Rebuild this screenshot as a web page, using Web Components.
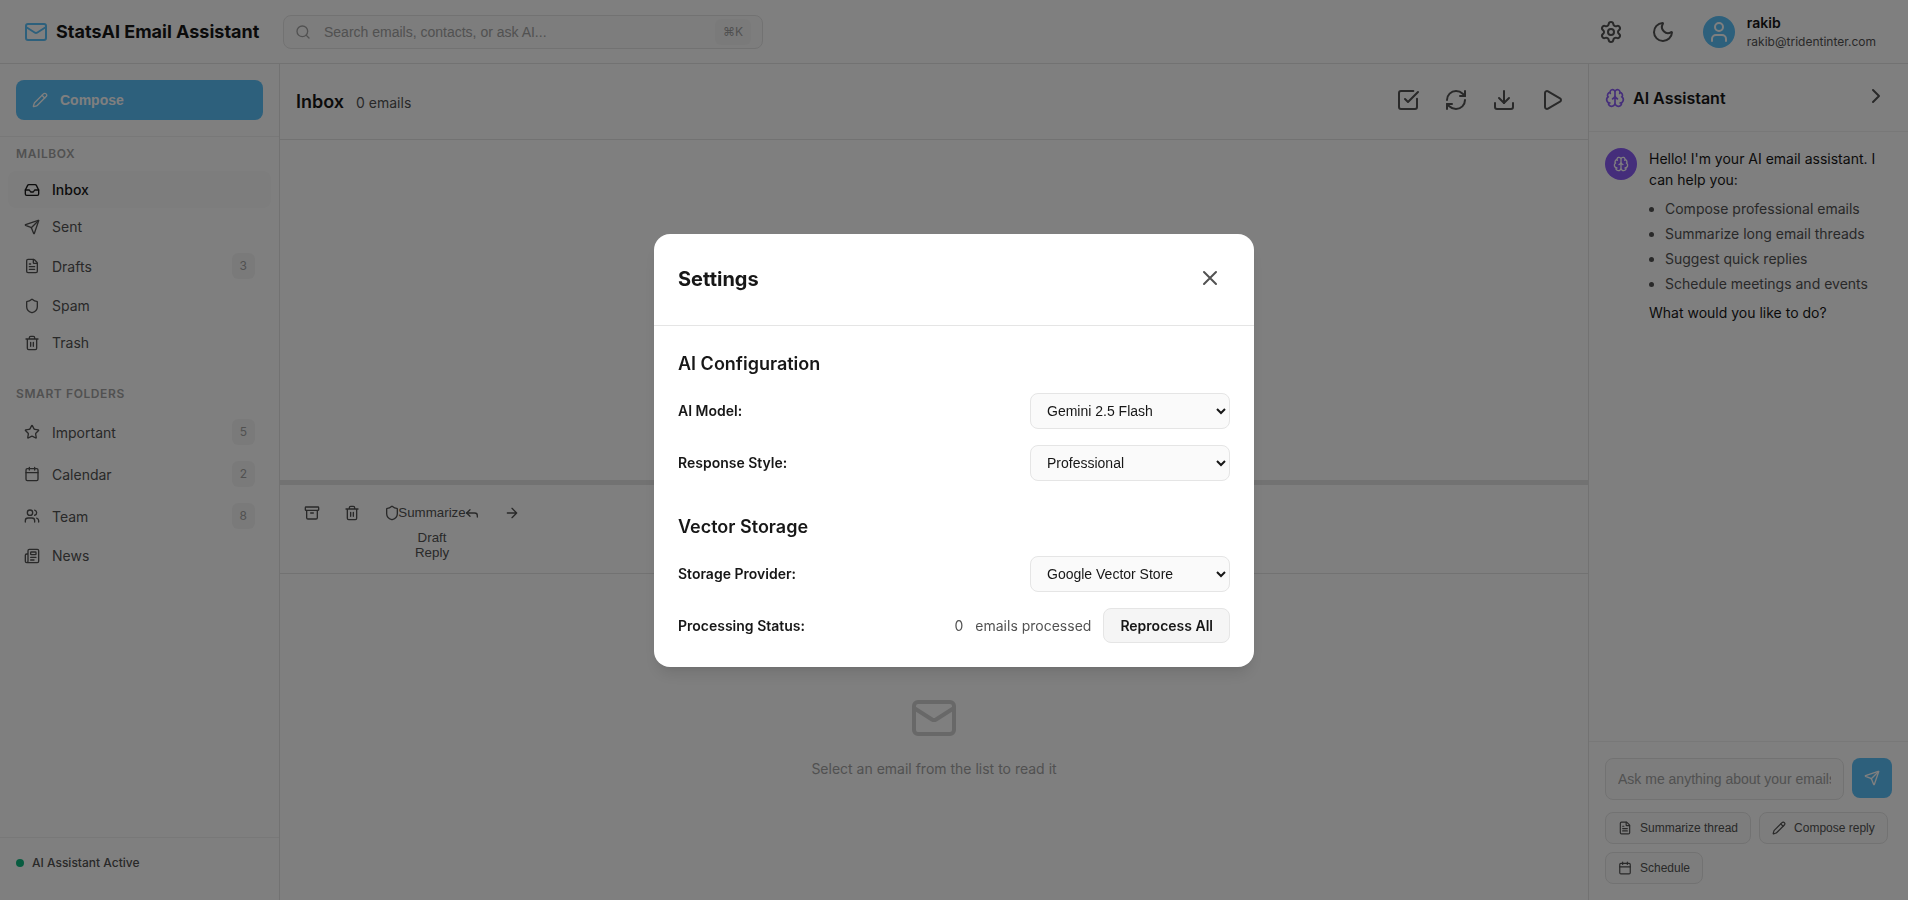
<!DOCTYPE html>
<html lang="en">
<head>
<meta charset="utf-8">
<title>StatsAI Email Assistant</title>
<style>
html,body{margin:0;height:100%;overflow:hidden}
body{font-family:Inter,"Liberation Sans",sans-serif;font-size:14px;line-height:1.5;color:#171717;background:#fff;
--line:#e5e5e5;--soft:#f0f0f0;--muted:#a3a3a3;--sub:#525252;--blue:#5bc0f8;--violet:#8b5cf6;--field:#fafafa;--chip:#f5f5f5;--ui:"Liberation Sans",Arial,sans-serif}
</style>
</head>
<body>
<mail-app></mail-app>
<script>
const ICONS={
mail:'<path d="m22 7-8.991 5.727a2 2 0 0 1-2.009 0L2 7"/><rect x="2" y="4" width="20" height="16" rx="2"/>',
search:'<path d="m21 21-4.34-4.34"/><circle cx="11" cy="11" r="8"/>',
settings:'<path d="M9.671 4.136a2.34 2.34 0 0 1 4.659 0 2.34 2.34 0 0 0 3.319 1.915 2.34 2.34 0 0 1 2.33 4.033 2.34 2.34 0 0 0 0 3.831 2.34 2.34 0 0 1-2.33 4.033 2.34 2.34 0 0 0-3.319 1.915 2.34 2.34 0 0 1-4.659 0 2.34 2.34 0 0 0-3.32-1.915 2.34 2.34 0 0 1-2.33-4.033 2.34 2.34 0 0 0 0-3.831A2.34 2.34 0 0 1 6.35 6.051a2.34 2.34 0 0 0 3.319-1.915"/><circle cx="12" cy="12" r="3"/>',
moon:'<path d="M20.985 12.486a9 9 0 1 1-9.473-9.472c.405-.022.617.46.402.803a6 6 0 0 0 8.268 8.268c.344-.215.825-.004.803.401"/>',
user:'<path d="M19 21v-2a4 4 0 0 0-4-4H9a4 4 0 0 0-4 4v2"/><circle cx="12" cy="7" r="4"/>',
pencil:'<path d="M21.174 6.812a1 1 0 0 0-3.986-3.987L3.842 16.174a2 2 0 0 0-.5.83l-1.321 4.352a.5.5 0 0 0 .623.622l4.353-1.32a2 2 0 0 0 .83-.497z"/><path d="m15 5 4 4"/>',
inbox:'<path d="M22 12h-6l-2 3h-4l-2-3H2"/><path d="M5.45 5.11 2 12v6a2 2 0 0 0 2 2h16a2 2 0 0 0 2-2v-6l-3.45-6.89A2 2 0 0 0 16.76 4H7.24a2 2 0 0 0-1.79 1.11z"/>',
send:'<path d="M14.536 21.686a.5.5 0 0 0 .937-.024l6.5-19a.496.496 0 0 0-.635-.635l-19 6.5a.5.5 0 0 0-.024.937l7.93 3.18a2 2 0 0 1 1.112 1.11z"/><path d="m21.854 2.147-10.94 10.939"/>',
file:'<path d="M6 22a2 2 0 0 1-2-2V4a2 2 0 0 1 2-2h8a2.4 2.4 0 0 1 1.704.706l3.588 3.588A2.4 2.4 0 0 1 20 8v12a2 2 0 0 1-2 2z"/><path d="M14 2v5a1 1 0 0 0 1 1h5M10 9H8M16 13H8M16 17H8"/>',
shield:'<path d="M20 13c0 5-3.5 7.5-7.66 8.95a1 1 0 0 1-.67-.01C7.5 20.5 4 18 4 13V6a1 1 0 0 1 1-1c2 0 4.5-1.2 6.24-2.72a1.17 1.17 0 0 1 1.52 0C14.51 3.81 17 5 19 5a1 1 0 0 1 1 1z"/>',
trash:'<path d="M10 11v6M14 11v6M19 6v14a2 2 0 0 1-2 2H7a2 2 0 0 1-2-2V6M3 6h18M8 6V4a2 2 0 0 1 2-2h4a2 2 0 0 1 2 2v2"/>',
star:'<path d="M11.525 2.295a.53.53 0 0 1 .95 0l2.31 4.679a2.123 2.123 0 0 0 1.595 1.16l5.166.756a.53.53 0 0 1 .294.904l-3.736 3.638a2.123 2.123 0 0 0-.611 1.878l.882 5.14a.53.53 0 0 1-.771.56l-4.618-2.428a2.122 2.122 0 0 0-1.973 0L6.396 21.01a.53.53 0 0 1-.77-.56l.881-5.139a2.122 2.122 0 0 0-.611-1.879L2.16 9.795a.53.53 0 0 1 .294-.906l5.165-.755a2.122 2.122 0 0 0 1.597-1.16z"/>',
calendar:'<path d="M8 2v4M16 2v4"/><rect width="18" height="18" x="3" y="4" rx="2"/><path d="M3 10h18"/>',
users:'<path d="M16 21v-2a4 4 0 0 0-4-4H6a4 4 0 0 0-4 4v2M16 3.128a4 4 0 0 1 0 7.744M22 21v-2a4 4 0 0 0-3-3.87"/><circle cx="9" cy="7" r="4"/>',
news:'<path d="M15 18h-5M18 14h-8M4 22h16a2 2 0 0 0 2-2V4a2 2 0 0 0-2-2H8a2 2 0 0 0-2 2v16a2 2 0 0 1-4 0v-9a2 2 0 0 1 2-2h2"/><rect width="8" height="4" x="10" y="6" rx="1"/>',
check:'<path d="M21 10.656V19a2 2 0 0 1-2 2H5a2 2 0 0 1-2-2V5a2 2 0 0 1 2-2h12.344"/><path d="m9 11 3 3L22 4"/>',
refresh:'<path d="M3 12a9 9 0 0 1 9-9 9.75 9.75 0 0 1 6.74 2.74L21 8"/><path d="M21 3v5h-5M21 12a9 9 0 0 1-9 9 9.75 9.75 0 0 1-6.74-2.74L3 16"/><path d="M8 16H3v5"/>',
download:'<path d="M12 15V3M21 15v4a2 2 0 0 1-2 2H5a2 2 0 0 1-2-2v-4"/><path d="m7 10 5 5 5-5"/>',
play:'<path d="M5 5a2 2 0 0 1 3.008-1.728l11.997 6.998a2 2 0 0 1 .003 3.458l-12 7A2 2 0 0 1 5 19z"/>',
brain:'<path d="M12 18V5M15 13a4.17 4.17 0 0 1-3-4 4.17 4.17 0 0 1-3 4M17.598 6.5A3 3 0 1 0 12 5a3 3 0 1 0-5.598 1.5M17.997 5.125a4 4 0 0 1 2.526 5.77M18 18a4 4 0 0 0 2-7.464M19.967 17.483A4 4 0 1 1 12 18a4 4 0 1 1-7.967-.517M6 18a4 4 0 0 1-2-7.464M6.003 5.125a4 4 0 0 0-2.526 5.77"/>',
chevron:'<path d="m9 18 6-6-6-6"/>',
archive:'<rect width="20" height="5" x="2" y="3" rx="1"/><path d="M4 8v11a2 2 0 0 0 2 2h12a2 2 0 0 0 2-2V8M10 12h4"/>',
reply:'<path d="M20 18v-2a4 4 0 0 0-4-4H4"/><path d="m9 17-5-5 5-5"/>',
arrow:'<path d="M5 12h14M12 5l7 7-7 7"/>',
close:'<path d="M18 6 6 18M6 6l12 12"/>'
};
function define(name,css,html){
  customElements.define(name,class extends HTMLElement{
    constructor(){
      super();
      const t=document.createElement('template');
      t.innerHTML='<style>*{box-sizing:border-box}'+css+'</style>'+(typeof html==='function'?html(this):html);
      this.attachShadow({mode:'open'}).append(t.content.cloneNode(true));
    }
  });
}
define('ui-icon',':host{display:block;flex:none}svg{display:block;fill:none;stroke:currentColor;stroke-width:2;stroke-linecap:round;stroke-linejoin:round}',
 e=>{const s=e.getAttribute('size')||16;return `<svg width="${s}" height="${s}" viewBox="0 0 24 24" aria-hidden="true">${ICONS[e.getAttribute('name')]}</svg>`});

define('icon-button',`:host{display:block;flex:none;color:var(--sub)}
button{display:flex;align-items:center;justify-content:center;width:var(--box,40px);height:var(--box,40px);padding:0;border:0;background:none;color:inherit;border-radius:6px}`,
 e=>`<button aria-label="${e.getAttribute('icon')}"><ui-icon name="${e.getAttribute('icon')}" size="${e.getAttribute('size')||24}"></ui-icon></button>`);

define('app-header',`:host{display:flex;align-items:center;height:64px;box-sizing:border-box;padding:0 24px;border-bottom:1px solid var(--line);background:#fff}
.brand{display:flex;align-items:center;gap:8px;width:235px;white-space:nowrap;font-size:18px;font-weight:700;line-height:27px}
.brand ui-icon{color:var(--blue)}
.search{display:flex;align-items:center;width:480px;height:34px;margin-left:24px;padding:0 11px 0 11px;border:1px solid var(--line);border-radius:8px;background:var(--field);color:var(--muted)}
input{flex:1;min-width:0;margin-left:13px;padding:0;border:0;background:none;font:14px var(--ui);outline:0}
input::placeholder{color:var(--muted)}
kbd{padding:4px 8px;border-radius:6px;background:var(--chip);font:12px/18px Inter,sans-serif;}
.actions{display:flex;align-items:center;gap:12px;margin-left:auto}
.user{display:flex;align-items:center;gap:12px;padding:0 8px}
.face{display:flex;align-items:center;justify-content:center;width:32px;height:32px;border-radius:50%;background:var(--blue);color:#fff}
.name{font-weight:600;line-height:21px}.addr{font-size:12px;line-height:18px;color:var(--sub)}`,
`<div class="brand"><ui-icon name="mail" size="24"></ui-icon><span>StatsAI Email Assistant</span></div>
<div class="search"><ui-icon name="search"></ui-icon><input placeholder="Search emails, contacts, or ask AI..."><kbd>⌘K</kbd></div>
<div class="actions"><icon-button icon="settings"></icon-button><icon-button icon="moon"></icon-button>
<div class="user"><div class="face"><ui-icon name="user" size="24"></ui-icon></div><div><div class="name">rakib</div><div class="addr">rakib@tridentinter.com</div></div></div></div>`);

define('nav-item',`:host{display:flex;align-items:center;gap:12px;margin:0 8px;padding:8px 16px;border-radius:8px;color:var(--sub);line-height:21px}
:host([active]){background:var(--field);color:#171717;font-weight:500}
.label{flex:1}.badge{padding:4px 8px;border-radius:6px;background:var(--chip);color:var(--muted);font-size:12px;line-height:18px}`,
 e=>`<ui-icon name="${e.getAttribute('icon')}"></ui-icon><span class="label"><slot></slot></span>${e.hasAttribute('count')?`<span class="badge">${e.getAttribute('count')}</span>`:''}`);

define('side-bar',`:host{display:flex;flex-direction:column;border-right:1px solid var(--line);background:#fff}
.top{padding:16px;border-bottom:1px solid var(--soft)}
.compose{display:flex;align-items:center;gap:12px;width:100%;height:40px;padding:0 16px;border:0;border-radius:8px;background:var(--blue);color:#fff;font:bold 14px var(--ui)}
h4{margin:8px 16px;font-size:12px;line-height:18px;font-weight:600;letter-spacing:.6px;color:var(--muted)}
nav+nav{margin-top:24px}
nav{display:flow-root}nav+nav h4{margin-top:0}
.foot{display:flex;align-items:center;gap:8px;margin-top:auto;padding:16px 16px 28px;border-top:1px solid var(--soft);font-size:12px;line-height:18px;font-weight:500;color:var(--sub)}
.dot{width:8px;height:8px;border-radius:50%;background:#10b981}`,
`<div class="top"><button class="compose"><ui-icon name="pencil"></ui-icon>Compose</button></div>
<nav><h4>MAILBOX</h4><nav-item icon="inbox" active>Inbox</nav-item><nav-item icon="send">Sent</nav-item><nav-item icon="file" count="3">Drafts</nav-item><nav-item icon="shield">Spam</nav-item><nav-item icon="trash">Trash</nav-item></nav>
<nav><h4>SMART FOLDERS</h4><nav-item icon="star" count="5">Important</nav-item><nav-item icon="calendar" count="2">Calendar</nav-item><nav-item icon="users" count="8">Team</nav-item><nav-item icon="news">News</nav-item></nav>
<div class="foot"><span class="dot"></span>AI Assistant Active</div>`);

define('mail-list',`:host{display:block;height:416px}
header{display:flex;justify-content:space-between;height:76px;padding:16px;border-bottom:1px solid var(--line)}
.title{display:flex;align-items:baseline;gap:12px;padding-top:8px}h2{margin:0;font-size:18px;line-height:27px;font-weight:600}
.count{color:var(--sub);line-height:21px}.tools{display:flex;gap:8px;align-items:flex-start}`,
`<header><div class="title"><h2>Inbox</h2><span class="count">0 emails</span></div>
<div class="tools"><icon-button icon="check"></icon-button><icon-button icon="refresh"></icon-button><icon-button icon="download"></icon-button><icon-button icon="play"></icon-button></div></header>`);

define('mail-reader',`:host{display:flex;flex-direction:column;flex:1;border-top:5px solid var(--line)}
.bar{display:flex;align-items:flex-start;gap:8px;height:89px;padding:12px 16px;border-bottom:1px solid var(--line);--box:32px}
.ai{width:32px}.ai button{display:flex;align-items:center;justify-content:center;width:32px;height:32px;padding:0;border:0;background:none;color:var(--sub);font:13.333px/15px var(--ui)}
.ai button:first-child{padding-bottom:1px}
.empty{flex:1;display:flex;flex-direction:column;align-items:center;justify-content:center;gap:16px;padding-bottom:1px;color:var(--muted);line-height:21px}
.empty ui-icon{opacity:.5;color:var(--muted)}`,
`<div class="bar"><icon-button icon="archive" size="16"></icon-button><icon-button icon="trash" size="16"></icon-button><icon-button icon="shield" size="16"></icon-button>
<div class="ai"><button>Summarize</button><button>Draft Reply</button></div>
<icon-button icon="reply" size="16"></icon-button><icon-button icon="arrow" size="16"></icon-button></div>
<div class="empty"><ui-icon name="mail" size="48"></ui-icon><span>Select an email from the list to read it</span></div>`);

define('quick-action',`:host{display:block}button{display:flex;align-items:center;gap:8px;height:32px;padding:0 12px;border:1px solid var(--line);border-radius:8px;background:var(--field);color:var(--sub);font:12px var(--ui)}`,
 e=>`<button><ui-icon name="${e.getAttribute('icon')}" size="14"></ui-icon><slot></slot></button>`);

define('ai-panel',`:host{display:flex;flex-direction:column;border-left:1px solid var(--line);background:#fff}
header{display:flex;justify-content:space-between;height:68px;padding:16px;border-bottom:1px solid var(--soft);--box:32px}
.title{display:flex;align-items:center;gap:8px;font-size:16px;font-weight:600}.title ui-icon{color:var(--violet)}
.msg{display:flex;gap:12px;padding:16px;flex:1}
.bot{display:flex;align-items:center;justify-content:center;flex:none;width:32px;height:32px;border-radius:50%;background:var(--violet);color:#fff}
p{margin:0}ul{margin:8px 0;padding-left:16px;color:var(--sub)}li{margin-bottom:4px}
footer{height:159px;padding:16px;border-top:1px solid var(--soft)}
.ask{display:flex;gap:8px;align-items:flex-start;margin-bottom:12px}
input{flex:1;min-width:0;height:42px;padding:0 12px;border:1px solid var(--line);border-radius:8px;background:var(--field);font:14px var(--ui)}
input::placeholder{color:var(--muted)}
.send{display:flex;align-items:center;justify-content:center;width:40px;height:40px;padding:0;border:0;border-radius:8px;background:var(--blue);color:#fff}
.quick{display:flex;flex-wrap:wrap;gap:8px}`,
`<header><div class="title"><ui-icon name="brain" size="20"></ui-icon>AI Assistant</div><icon-button icon="chevron"></icon-button></header>
<div class="msg"><div class="bot"><ui-icon name="brain"></ui-icon></div><div><p>Hello! I'm your AI email assistant. I can help you:</p>
<ul><li>Compose professional emails</li><li>Summarize long email threads</li><li>Suggest quick replies</li><li>Schedule meetings and events</li></ul><p>What would you like to do?</p></div></div>
<footer><div class="ask"><input placeholder="Ask me anything about your emails..."><button class="send"><ui-icon name="send"></ui-icon></button></div>
<div class="quick"><quick-action icon="file">Summarize thread</quick-action><quick-action icon="pencil">Compose reply</quick-action><quick-action icon="calendar">Schedule</quick-action></div></footer>`);

define('setting-row',`:host{display:flex;align-items:center;justify-content:space-between;margin-top:16px}
label{font-weight:600}.value{display:flex;align-items:center;gap:12px;color:var(--sub)}
::slotted(select){width:200px;height:36px;padding:8px 12px;border:1px solid var(--line);border-radius:8px;background:var(--field);color:#171717;font:14px var(--ui)}
::slotted(button){height:35px;padding:8px 16px;border:1px solid var(--line);border-radius:8px;background:var(--chip);color:#171717;font:600 14px Inter,sans-serif}`,
 e=>`<label>${e.getAttribute('label')}</label><div class="value"><slot></slot></div>`);

define('settings-dialog',`:host{position:fixed;inset:0;display:flex;align-items:center;justify-content:center;background:rgba(0,0,0,.5)}
.card{width:600px;border-radius:16px;background:#fff;box-shadow:0 10px 15px -3px rgba(0,0,0,.1),0 4px 6px -2px rgba(0,0,0,.05)}
header{display:flex;justify-content:space-between;height:92px;padding:24px;border-bottom:1px solid var(--line)}
h2{margin:0;align-self:center;font-size:20px;line-height:30px;font-weight:700}
.body{padding:24px}h3{margin:0;font-size:18px;line-height:27px;font-weight:600}section+section{margin-top:32px}`,
`<div class="card"><header><h2>Settings</h2><icon-button icon="close"></icon-button></header>
<div class="body"><section><h3>AI Configuration</h3>
<setting-row label="AI Model:"><select><option>Gemini 2.5 Flash</option></select></setting-row>
<setting-row label="Response Style:"><select><option>Professional</option></select></setting-row></section>
<section><h3>Vector Storage</h3>
<setting-row label="Storage Provider:"><select><option>Google Vector Store</option></select></setting-row>
<setting-row label="Processing Status:"><span>0</span><span>emails processed</span><button>Reprocess All</button></setting-row></section></div></div>`);

define('mail-app',`:host{display:grid;grid-template:64px 1fr/280px 1fr 320px;height:100vh}
app-header{grid-column:1/-1}main{display:flex;flex-direction:column;min-width:0}`,
`<app-header></app-header><side-bar></side-bar><main><mail-list></mail-list><mail-reader></mail-reader></main><ai-panel></ai-panel><settings-dialog></settings-dialog>`);
</script>
</body>
</html>
